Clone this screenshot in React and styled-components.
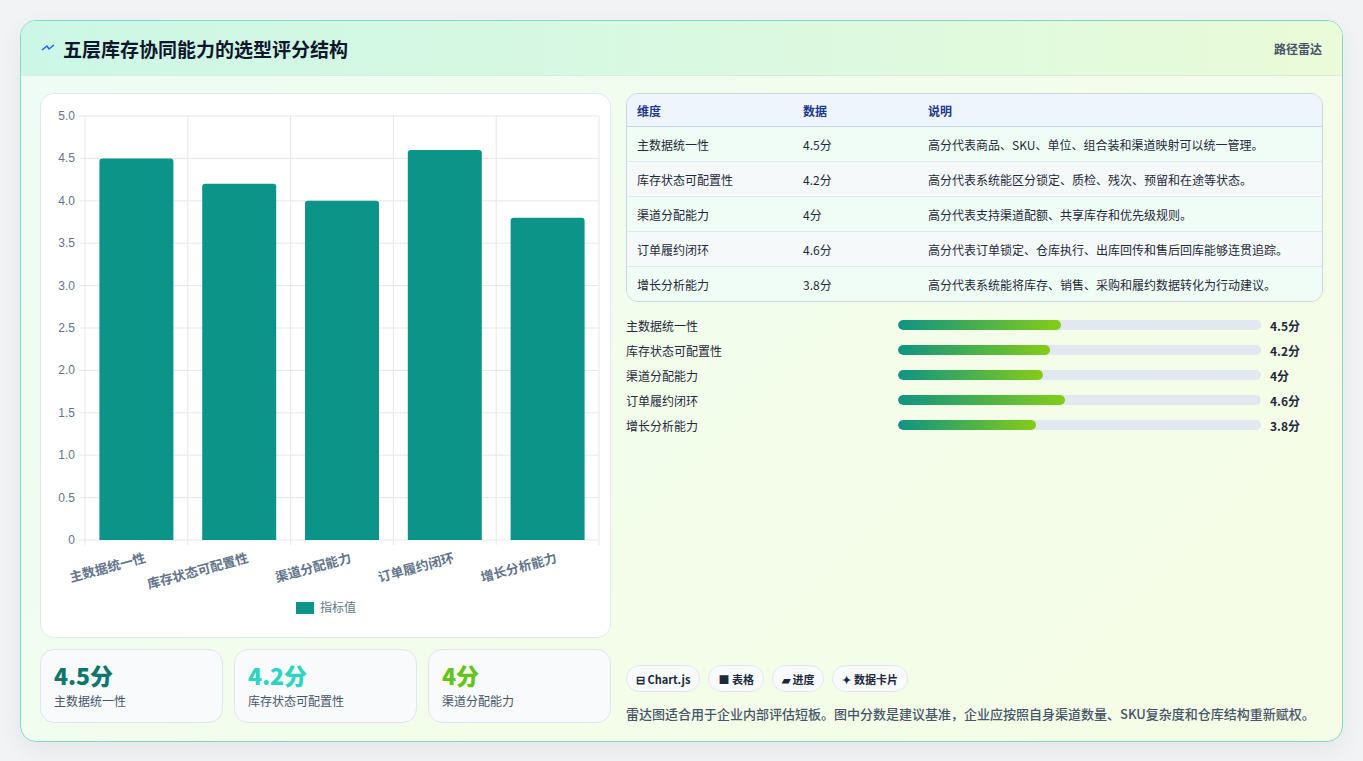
import React from 'react';
import styled, { createGlobalStyle } from 'styled-components';

const data = [
  { name: '主数据统一性', v: 4.5, note: '高分代表商品、SKU、单位、组合装和渠道映射可以统一管理。' },
  { name: '库存状态可配置性', v: 4.2, note: '高分代表系统能区分锁定、质检、残次、预留和在途等状态。' },
  { name: '渠道分配能力', v: 4, note: '高分代表支持渠道配额、共享库存和优先级规则。' },
  { name: '订单履约闭环', v: 4.6, note: '高分代表订单锁定、仓库执行、出库回传和售后回库能够连贯追踪。' },
  { name: '增长分析能力', v: 3.8, note: '高分代表系统能将库存、销售、采购和履约数据转化为行动建议。' },
];

const GlobalStyle = createGlobalStyle`
  body {
    margin: 0;
    background: #f1f3f4;
    font-family: "Noto Sans CJK SC", "Noto Sans", sans-serif;
  }
`;

const Page = styled.div`
  padding: 20px 20px 20px 20px;
`;

const Card = styled.div`
  border: 1px solid #7fdccb;
  border-radius: 16px;
  overflow: hidden;
  background: linear-gradient(135deg, #eefcf6 0%, #f3fde9 60%, #f6fde6 100%);
  box-shadow: 0 8px 24px rgba(0, 0, 0, 0.06);
`;

const Header = styled.div`
  height: 54px;
  display: flex;
  align-items: center;
  justify-content: space-between;
  padding: 0 20px;
  background: linear-gradient(90deg, #ccf7e6 0%, #dcf9e0 60%, #eafbd8 100%);
  border-bottom: 1px solid #d9ece4;
`;

const Title = styled.h1`
  margin: 0;
  font-size: 19px;
  font-weight: 700;
  color: #0f172a;
  display: flex;
  align-items: center;
  gap: 8px;
`;

const Tag = styled.span`
  font-size: 12px;
  color: #475569;
  font-weight: 600;
`;

const Body = styled.div`
  display: grid;
  grid-template-columns: 571px 1fr;
  gap: 15px;
  padding: 17px 19px 18px 19px;
`;

const Col = styled.div`
  display: flex;
  flex-direction: column;
  gap: 11px;
`;

const ChartBox = styled.div`
  height: 543px;
  background: #fff;
  border: 1px solid #e2e8f0;
  border-radius: 14px;
`;

const Stats = styled.div`
  display: grid;
  grid-template-columns: repeat(3, 1fr);
  gap: 11px;
`;

const Stat = styled.div`
  height: 74px;
  box-sizing: border-box;
  border: 1px solid #dfe7ee;
  border-radius: 14px;
  background: #f8fafc;
  padding: 10px 13px;
`;

const StatVal = styled.div`
  font-size: 23px;
  font-weight: 800;
  color: ${p => p.c};
  line-height: 30px;
`;

const StatLbl = styled.div`
  font-size: 12px;
  color: #475569;
  margin-top: 2px;
`;

const Table = styled.table`
  width: 100%;
  border-collapse: separate;
  border-spacing: 0;
  border: 1px solid #cbd5e1;
  border-radius: 12px;
  overflow: hidden;
  font-size: 12px;
  color: #1e293b;
  th {
    background: #eef5fd;
    color: #1e3a8a;
    text-align: left;
    font-weight: 600;
    height: 32px;
    padding: 0 10px;
    border-bottom: 1px solid #cbd5e1;
  }
  td {
    height: 34px;
    padding: 0 10px;
    border-bottom: 1px solid #e2e8f0;
  }
  tr:last-child td { border-bottom: none; }
  tbody tr:nth-child(odd) td { background: #f0fdf6; }
  tbody tr:nth-child(even) td { background: #f6f9fa; }
`;

const Bars = styled.div`
  display: flex;
  flex-direction: column;
  gap: 7px;
  margin-top: 3px;
`;

const BarRow = styled.div`
  display: grid;
  grid-template-columns: 263px 363px 1fr;
  gap: 9px;
  align-items: center;
  font-size: 12px;
  color: #1e293b;
  height: 18px;
`;

const Track = styled.div`
  height: 10px;
  border-radius: 5px;
  background: #e2e8f0;
  overflow: hidden;
`;

const Fill = styled.div`
  height: 100%;
  border-radius: 5px;
  background: linear-gradient(90deg, #0f9483, #84cc16);
`;

const Val = styled.span`
  font-weight: 700;
`;

const Spacer = styled.div`
  flex: 1;
`;

const Chips = styled.div`
  display: flex;
  gap: 8px;
`;

const Chip = styled.span`
  height: 27px;
  box-sizing: border-box;
  padding: 0 9px;
  border: 1px solid #e2e8f0;
  border-radius: 14px;
  background: #f8fafc;
  font-size: 11px;
  font-weight: 700;
  color: #1e293b;
  display: flex;
  align-items: center;
  gap: 3px;
`;

const Note = styled.p`
  margin: 12px 0 0;
  font-size: 13px;
  color: #475569;
  font-weight: 500;
`;

function Chart() {
  const x0 = 44, x1 = 558, y0 = 22, y1 = 446;
  const step = (x1 - x0) / 5;
  const ticks = [0, 0.5, 1, 1.5, 2, 2.5, 3, 3.5, 4, 4.5, 5];
  const yy = v => y1 - (v / 5) * (y1 - y0);
  return (
    <svg width="569" height="541" style={{ display: 'block' }}>
      {ticks.map(t => (
        <g key={t}>
          <line x1={x0 - 5} x2={x1} y1={yy(t)} y2={yy(t)} stroke="#e5e7eb" />
          <text x={x0 - 10} y={yy(t) + 4} textAnchor="end" fontSize="12" fill="#64748b" fontFamily="Liberation Sans, sans-serif">
            {t === 0 ? '0' : t.toFixed(1)}
          </text>
        </g>
      ))}
      {[0, 1, 2, 3, 4, 5].map(i => (
        <line key={i} x1={x0 + i * step} x2={x0 + i * step} y1={y0} y2={y1 + 5} stroke="#e5e7eb" />
      ))}
      {data.map((d, i) => {
        const cx = x0 + step * (i + 0.5);
        return (
          <g key={d.name}>
            <path
              d={`M${cx - 37} ${y1} V${yy(d.v) + 3} q0 -3 3 -3 H${cx + 34} q3 0 3 3 V${y1} Z`}
              fill="#0d9488"
            />
            <text
              x={cx + 10}
              y={y1 + 22}
              textAnchor="end"
              fontSize="13"
              fontWeight="600"
              fill="#64748b"
              transform={`rotate(-15 ${cx + 10} ${y1 + 22})`}
            >
              {d.name}
            </text>
          </g>
        );
      })}
      <rect x="255" y="508" width="18" height="12" fill="#0d9488" />
      <text x="279" y="518" fontSize="12" fill="#64748b">指标值</text>
    </svg>
  );
}

export default function App() {
  return (
    <Page>
      <GlobalStyle />
      <Card>
        <Header>
          <Title>
            <svg width="14" height="10" viewBox="0 0 14 10">
              <path d="M1 7 L6 3 L8 6 L13 2" stroke="#2563eb" strokeWidth="1.5" fill="none" />
            </svg>
            五层库存协同能力的选型评分结构
          </Title>
          <Tag>路径雷达</Tag>
        </Header>
        <Body>
          <Col>
            <ChartBox><Chart /></ChartBox>
            <Stats>
              <Stat><StatVal c="#0f766e">4.5分</StatVal><StatLbl>主数据统一性</StatLbl></Stat>
              <Stat><StatVal c="#2dd4bf">4.2分</StatVal><StatLbl>库存状态可配置性</StatLbl></Stat>
              <Stat><StatVal c="#65c31a">4分</StatVal><StatLbl>渠道分配能力</StatLbl></Stat>
            </Stats>
          </Col>
          <Col>
            <Table>
              <thead>
                <tr><th style={{ width: 146 }}>维度</th><th style={{ width: 105 }}>数据</th><th>说明</th></tr>
              </thead>
              <tbody>
                {data.map(d => (
                  <tr key={d.name}><td>{d.name}</td><td>{d.v}分</td><td>{d.note}</td></tr>
                ))}
              </tbody>
            </Table>
            <Bars>
              {data.map(d => (
                <BarRow key={d.name}>
                  <span>{d.name}</span>
                  <Track><Fill style={{ width: `${d.v * 10}%` }} /></Track>
                  <Val>{d.v}分</Val>
                </BarRow>
              ))}
            </Bars>
            <Spacer />
            <div>
              <Chips>
                <Chip>⊟ Chart.js</Chip>
                <Chip>■ 表格</Chip>
                <Chip>▰ 进度</Chip>
                <Chip>✦ 数据卡片</Chip>
              </Chips>
              <Note>雷达图适合用于企业内部评估短板。图中分数是建议基准，企业应按照自身渠道数量、SKU复杂度和仓库结构重新赋权。</Note>
            </div>
          </Col>
        </Body>
      </Card>
    </Page>
  );
}
